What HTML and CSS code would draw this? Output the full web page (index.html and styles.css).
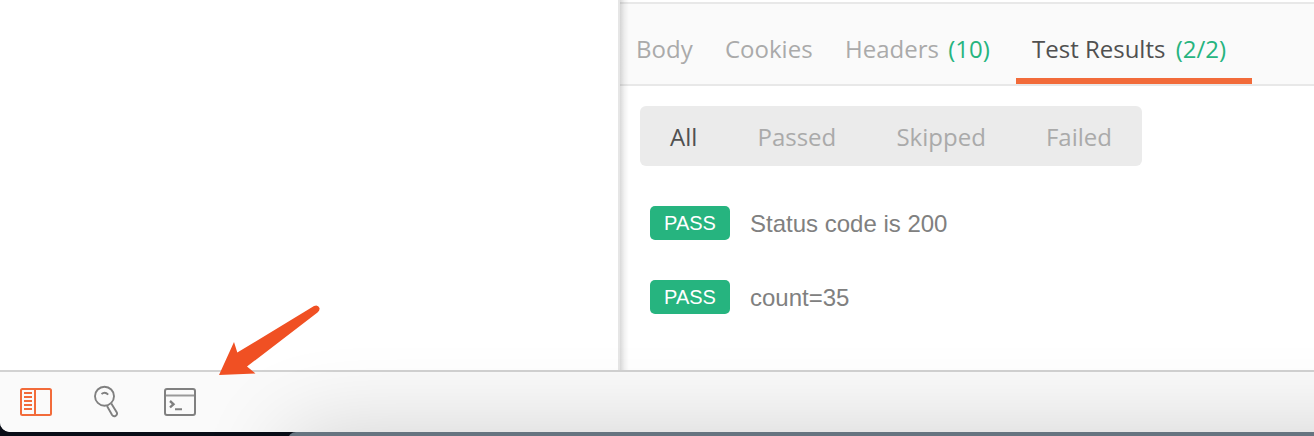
FILE: index.html
```html
<!DOCTYPE html>
<html lang="en">
<head>
<meta charset="utf-8">
<title>Test Results</title>
<link rel="stylesheet" href="styles.css">
</head>
<body>
<div class="desktop">
  <div class="window">
    <main class="panes">
      <section class="sidebar"></section>
      <section class="response">
        <nav class="tabs">
          <a class="tab tab-body">Body</a>
          <a class="tab tab-cookies">Cookies</a>
          <a class="tab tab-headers">Headers <span class="count">(10)</span></a>
          <a class="tab active">Test Results <span class="count">(2/2)</span></a>
        </nav>
        <div class="results">
          <div class="filters">
            <span class="filter selected">All</span>
            <span class="filter">Passed</span>
            <span class="filter">Skipped</span>
            <span class="filter">Failed</span>
          </div>
          <div class="result"><span class="badge">PASS</span><span class="name">Status code is 200</span></div>
          <div class="result"><span class="badge">PASS</span><span class="name">count=35</span></div>
        </div>
      </section>
    </main>
    <footer class="statusbar">
      <svg class="icon-sidebar" width="32" height="28" viewBox="0 0 32 28" fill="none" stroke="#f26b3a" stroke-width="2">
        <rect x="1" y="1" width="30" height="26" rx="1.5"/>
        <path d="M15 1v26M4 5h8M4 9h8M4 13h8M4 17h8M4 21h8"/>
      </svg>
      <svg class="icon-search" width="28" height="34" viewBox="0 0 28 34" fill="none" stroke="#808080" stroke-width="1.9">
        <circle cx="11.500" cy="12.200" r="9.500"/>
        <path d="M8.500 10q3.500-2.800 6.700.6M14 22l5.100 9a2.700 2.700 0 0 0 4.700-2.600l-5.500-9"/>
      </svg>
      <svg class="icon-console" width="32" height="28" viewBox="0 0 32 28" fill="none" stroke="#808080" stroke-width="2">
        <rect x="1" y="1" width="30" height="26" rx="2"/>
        <path d="M2 7.500h28" stroke="#999"/>
        <path d="M6 13l3.500 3.200L6 19.500" stroke-width="2.400"/>
        <path d="M11 21.300h7"/>
      </svg>
    </footer>
  </div>
  <div class="back-window"></div>
  <svg class="arrow" width="104" height="74" viewBox="0 0 104 74">
    <path fill="#f05023" d="M0 73L15 40L18.300 50.500L95 4Q99 2.200 100.500 6Q101 8.500 98.500 10.500L28 64.500L36.500 71.500z"/>
  </svg>
</div>
</body>
</html>
```

FILE: styles.css
```css
* { box-sizing: border-box; }
body { margin: 0; overflow: hidden; }
.desktop {
  position: relative;
  height: 436px;
  overflow: hidden;
  background: #090d17;
  font-family: "Open Sans", sans-serif;
  font-size: 24px;
}
.window {
  height: 432px;
  display: flex;
  flex-direction: column;
  overflow: hidden;
  border-bottom-left-radius: 10px;
  background: #fff;
}
.panes { display: flex; height: 370px; }
.sidebar { width: 620px; border-right: 2px solid #e6e6e6; }
.response {
  flex: 1;
  padding-top: 2px;
  background: #fff;
  position: relative;
}
.response::before {
  content: "";
  position: absolute;
  left: 0;
  top: 0;
  bottom: 0;
  width: 9px;
  background: linear-gradient(to right, rgba(0,0,0,.15), rgba(0,0,0,.05) 50%, transparent);
}
.tabs {
  display: flex;
  height: 84px;
  border-top: 2px solid #e8e8e8;
  border-bottom: 2px solid #e8e8e8;
  background: #fafafa;
  color: #aaa;
}
.tab {
  height: 80px;
  line-height: 33px;
  padding: 28px 0 0 16px;
  white-space: nowrap;
}
.tab-body { width: 89px; }
.tab-cookies { width: 120px; }
.tab-headers { width: 187px; }
.active { width: 236px; color: #505050; border-bottom: 6px solid #f26b3a; }
.count { color: #26b47f; margin-left: 4px; }
.tab-headers .count { margin-left: 3px; }
.results { padding: 20px; }
.filters {
  display: flex;
  justify-content: space-between;
  width: 502px;
  height: 60px;
  padding: 0 30px;
  border-radius: 6px;
  background: #ebebeb;
  color: #aaa;
  line-height: 62px;
}
.selected { color: #505050; }
.result {
  display: flex;
  align-items: center;
  gap: 20px;
  height: 34px;
  margin: 40px 0 0 10px;
  font-family: "Liberation Sans", Arial, sans-serif;
  color: #808080;
}
.badge {
  width: 80px;
  height: 34px;
  border-radius: 5px;
  background: #26b47f;
  color: #fff;
  font-size: 20px;
  line-height: 35px;
  text-align: center;
}
.name { line-height: 34px; padding-top: 2px; }
.statusbar {
  display: flex;
  align-items: flex-start;
  height: 62px;
  padding: 16px 20px 0;
  border-top: 2px solid #d2d2d2;
  background: #fafafa;
}
.icon-search { margin: -4px 0 0 41px; }
.icon-console { margin-left: 43px; }
.back-window {
  position: absolute;
  left: 288px;
  top: 432px;
  width: 1200px;
  height: 300px;
  border-top-left-radius: 8px;
  background: #667480;
  box-shadow: 0 0 90px rgba(0,0,0,.165);
}
.arrow { position: absolute; left: 219px; top: 302px; }
```
